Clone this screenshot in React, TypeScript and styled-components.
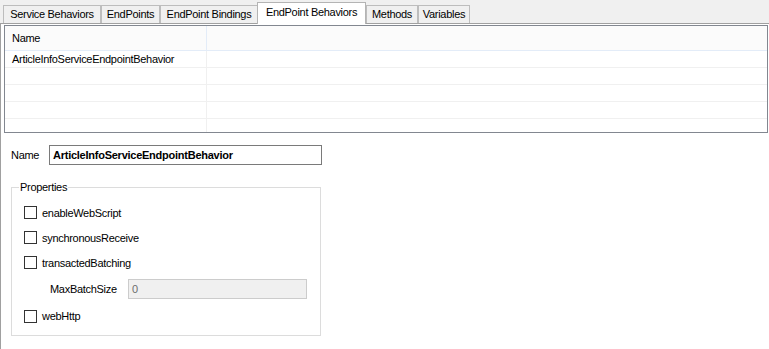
import styled, { createGlobalStyle } from 'styled-components';

const GlobalStyle = createGlobalStyle`
  html, body {
    margin: 0;
    padding: 0;
    background: #f0f0f0;
  }
  body {
    font-family: "Liberation Sans", Arial, sans-serif;
    font-size: 11px;
    letter-spacing: -0.3px;
    color: #000;
  }
`;

const Window = styled.div`
  width: 769px;
  height: 349px;
  overflow: hidden;
  display: flex;
  flex-direction: column;
`;

const TabStrip = styled.div`
  display: flex;
  align-items: flex-end;
  height: 23px;
  padding-left: 3px;
  box-sizing: border-box;
  position: relative;
  z-index: 1;
`;

const Tab = styled.div<{ $w: number; $active?: boolean }>`
  box-sizing: border-box;
  width: ${(p) => p.$w}px;
  height: ${(p) => (p.$active ? 22 : 18)}px;
  margin-bottom: ${(p) => (p.$active ? -1 : 0)}px;
  margin-left: ${(p) => (p.$active ? -1 : 0)}px;
  padding-top: ${(p) => (p.$active ? 3 : 2)}px;
  border: 1px solid ${(p) => (p.$active ? '#b4b4b4' : '#bdbdbd')};
  border-bottom: none;
  background: ${(p) => (p.$active ? '#fff' : '#f0f0f0')};
  text-align: center;
  white-space: nowrap;
  line-height: 13px;
`;

const Page = styled.div`
  flex: 1;
  background: #fff;
  border-top: 1px solid #a0a0a0;
  border-left: 1px solid #a0a0a0;
  display: flex;
  flex-direction: column;
`;

const ListView = styled.div`
  box-sizing: border-box;
  margin: 1px 1px 0 3px;
  height: 108px;
  border: 1px solid #828790;
  background: #fff;
  overflow: hidden;
`;

const HeaderRow = styled.div`
  display: flex;
  height: 24px;
  background: #fbfbfb;
  border-bottom: 1px solid #e3ecf8;
`;

const HeaderCell = styled.div<{ $first?: boolean }>`
  box-sizing: content-box;
  width: ${(p) => (p.$first ? '194px' : 'auto')};
  flex: ${(p) => (p.$first ? 'none' : 1)};
  padding-left: 7px;
  display: flex;
  align-items: center;
  border-right: ${(p) => (p.$first ? '1px solid #e3ecf8' : 'none')};
`;

const Row = styled.div`
  display: flex;
  height: 16px;
  border-bottom: 1px solid #f0f0f0;
`;

const Cell = styled.div<{ $first?: boolean }>`
  width: ${(p) => (p.$first ? '194px' : 'auto')};
  flex: ${(p) => (p.$first ? 'none' : 1)};
  padding-left: 7px;
  display: flex;
  align-items: center;
  white-space: nowrap;
  border-right: ${(p) => (p.$first ? '1px solid #f0f0f0' : 'none')};
`;

const NameRow = styled.div`
  display: flex;
  align-items: center;
  margin: 12px 0 0 10px;
`;

const NameLabel = styled.div`
  width: 38px;
`;

const NameInput = styled.div`
  box-sizing: border-box;
  width: 273px;
  height: 20px;
  border: 1px solid #7a7a7a;
  padding-left: 3px;
  display: flex;
  align-items: center;
  font-weight: bold;
  font-size: 11px;
  letter-spacing: -0.25px;
`;

const GroupBox = styled.div`
  position: relative;
  box-sizing: border-box;
  width: 310px;
  margin: 22px 0 0 10px;
  padding: 12px 0 5px 12px;
  border: 1px solid #dcdcdc;
`;

const GroupTitle = styled.div`
  position: absolute;
  top: -7px;
  left: 7px;
  padding: 0 1px;
  background: #fff;
  line-height: 13px;
`;

const CheckRow = styled.div<{ $h: number }>`
  display: flex;
  align-items: center;
  gap: 5px;
  height: ${(p) => p.$h}px;
`;

const CheckBox = styled.div`
  box-sizing: border-box;
  width: 13px;
  height: 13px;
  border: 1px solid #333;
  background: #fff;
`;

const FieldRow = styled.div<{ $h: number }>`
  display: flex;
  align-items: center;
  height: ${(p) => p.$h}px;
  padding-left: 26px;
`;

const FieldLabel = styled.div`
  width: 78px;
`;

const DisabledInput = styled.div`
  box-sizing: border-box;
  width: 179px;
  height: 20px;
  border: 1px solid #cccccc;
  background: #f0f0f0;
  color: #6d6d6d;
  padding-left: 3px;
  display: flex;
  align-items: center;
`;

const tabs = [
  { label: 'Service Behaviors', w: 98 },
  { label: 'EndPoints', w: 59 },
  { label: 'EndPoint Bindings', w: 98 },
  { label: 'EndPoint Behaviors', w: 109, active: true },
  { label: 'Methods', w: 52 },
  { label: 'Variables', w: 52 },
];

const rows = ['ArticleInfoServiceEndpointBehavior', '', '', '', ''];

export default function App() {
  return (
    <Window>
      <GlobalStyle />
      <TabStrip>
        {tabs.map((t) => (
          <Tab key={t.label} $w={t.w} $active={t.active}>
            {t.label}
          </Tab>
        ))}
      </TabStrip>
      <Page>
        <ListView>
          <HeaderRow>
            <HeaderCell $first>Name</HeaderCell>
            <HeaderCell />
          </HeaderRow>
          {rows.map((r, i) => (
            <Row key={i}>
              <Cell $first>{r}</Cell>
              <Cell />
            </Row>
          ))}
        </ListView>

        <NameRow>
          <NameLabel>Name</NameLabel>
          <NameInput>ArticleInfoServiceEndpointBehavior</NameInput>
        </NameRow>

        <GroupBox>
          <GroupTitle>Properties</GroupTitle>
          <CheckRow $h={25}>
            <CheckBox />
            enableWebScript
          </CheckRow>
          <CheckRow $h={25}>
            <CheckBox />
            synchronousReceive
          </CheckRow>
          <CheckRow $h={25}>
            <CheckBox />
            transactedBatching
          </CheckRow>
          <FieldRow $h={27}>
            <FieldLabel>MaxBatchSize</FieldLabel>
            <DisabledInput>0</DisabledInput>
          </FieldRow>
          <CheckRow $h={28}>
            <CheckBox />
            webHttp
          </CheckRow>
        </GroupBox>
      </Page>
    </Window>
  );
}
